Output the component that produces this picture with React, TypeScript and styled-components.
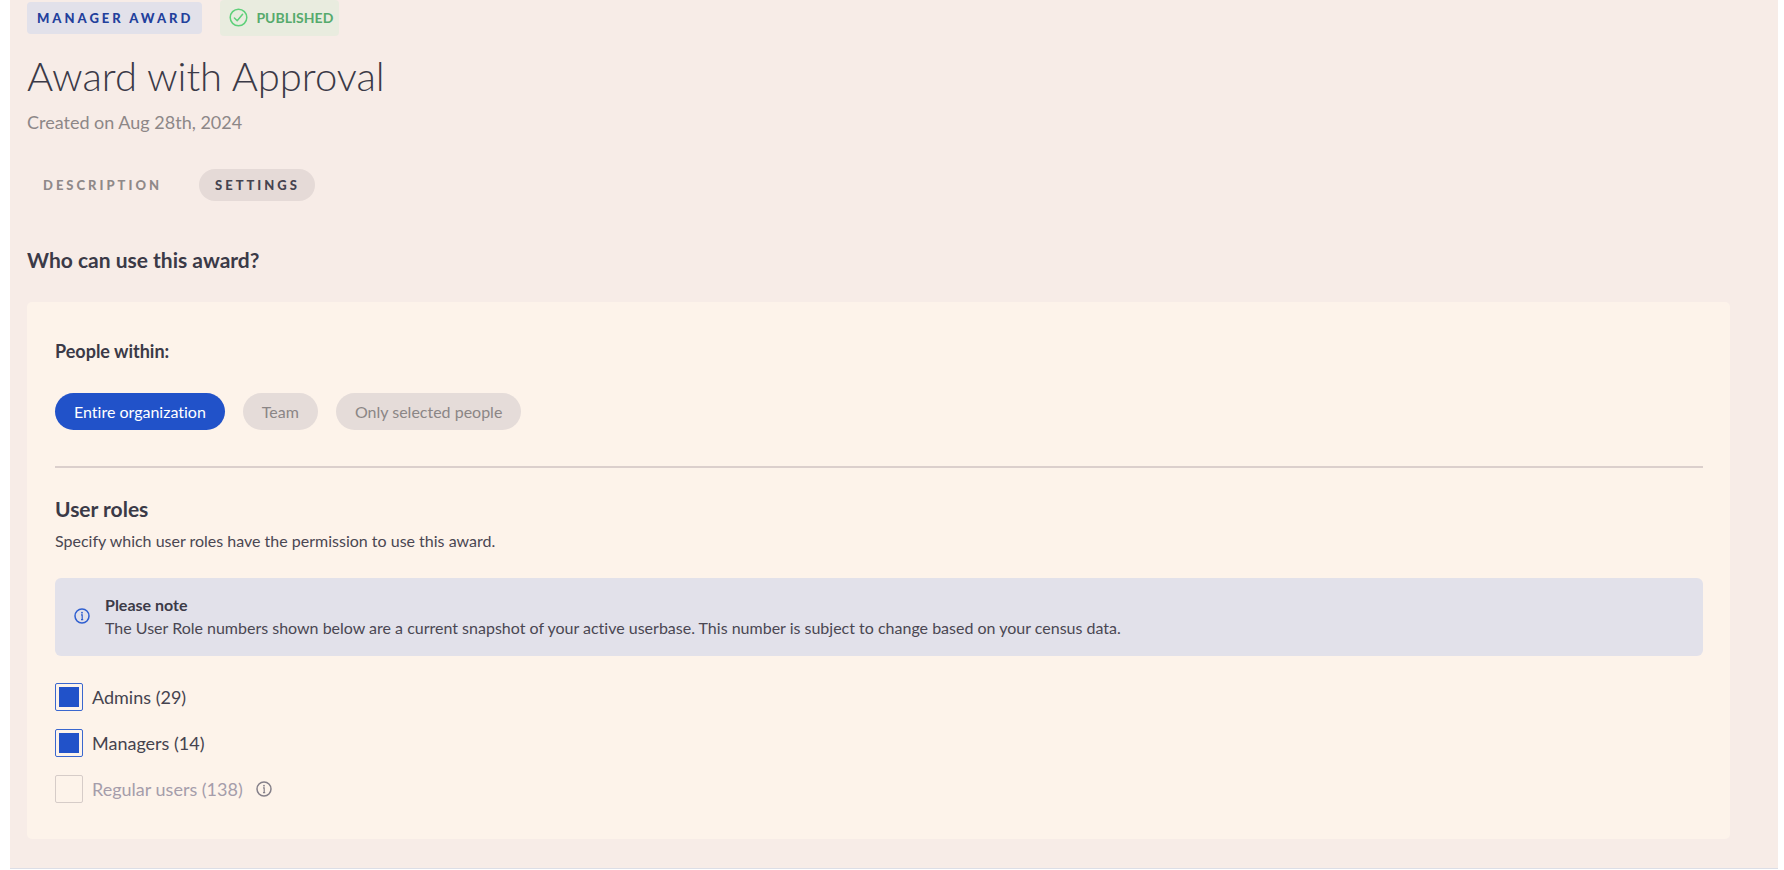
import React from "react";
import styled, { createGlobalStyle } from "styled-components";

const GlobalStyle = createGlobalStyle`
  *, *::before, *::after { box-sizing: border-box; }
  body {
    margin: 0;
    background: #ffffff;
    color: #3b3a47;
    font-family: Lato, "Liberation Sans", sans-serif;
    font-size: 16px;
    font-variant-ligatures: none;
  }
  h1, h2, h3, p { margin: 0; }
  button { font-family: inherit; font-variant-ligatures: inherit; cursor: pointer; border: 0; }
`;

const Page = styled.main`
  margin: 0 6px 0 10px;
  padding: 0 48px 29px 17px;
  background: #f7ece7;
  border-bottom: 1px solid #dcdee6;
`;

const Badges = styled.div`
  display: flex;
  align-items: center;
  gap: 18px;
`;

const TypeBadge = styled.span`
  padding: 0 9px 0 10px;
  border-radius: 4px;
  background: #e2e1ea;
  color: #22409c;
  font-size: 13px;
  font-weight: 900;
  line-height: 32px;
  letter-spacing: 3px;
`;

const StatusBadge = styled.span`
  display: flex;
  align-items: center;
  gap: 8px;
  padding: 0 6px 2px 9px;
  height: 36px;
  border-radius: 4px;
  background: #e9ecdf;
  color: #56aa6c;
  font-size: 14px;
  font-weight: 700;
`;

const Title = styled.h1`
  margin-top: 16px;
  font-size: 40px;
  font-weight: 300;
  line-height: 48px;
`;

const Created = styled.p`
  margin-top: 10px;
  color: #8d8787;
  font-size: 18px;
  line-height: 24px;
`;

const Tabs = styled.div`
  display: flex;
  gap: 22px;
  margin-top: 35px;
`;

const Tab = styled.button<{ $active?: boolean }>`
  height: 32px;
  padding: 0 15px 0 16px;
  border-radius: 16px;
  background: ${(p) => (p.$active ? "#e5dad7" : "transparent")};
  color: ${(p) => (p.$active ? "#45434f" : "#8f8989")};
  font-size: 13px;
  font-weight: 900;
  letter-spacing: 3px;
`;

const SectionTitle = styled.h2`
  margin-top: 45px;
  font-size: 21px;
  font-weight: 700;
  line-height: 28px;
`;

const Panel = styled.section`
  margin-top: 28px;
  padding: 37px 27px 36px 28px;
  border-radius: 5px;
  background: #fdf3ea;
`;

const GroupTitle = styled.h3`
  font-size: 18px;
  font-weight: 700;
  line-height: 24px;
`;

const Pills = styled.div`
  display: flex;
  flex-wrap: wrap;
  gap: 18px;
  margin-top: 30px;
`;

const Pill = styled.button<{ $active?: boolean }>`
  height: 37px;
  padding: 0 19px;
  border-radius: 19px;
  background: ${(p) => (p.$active ? "#2152c9" : "#e5dcd9")};
  color: ${(p) => (p.$active ? "#ffffff" : "#8b8686")};
  font-size: 16px;
`;

const Divider = styled.hr`
  height: 2px;
  margin: 36px 0 0;
  border: 0;
  background: #dbcfcc;
`;

const RolesTitle = styled.h2`
  margin-top: 27px;
  font-size: 21px;
  font-weight: 700;
  line-height: 28px;
`;

const Hint = styled.p`
  margin-top: 6px;
  color: #4a4752;
  line-height: 24px;
`;

const Note = styled.aside`
  display: flex;
  align-items: center;
  gap: 15px;
  margin-top: 25px;
  padding: 15px 19px 17px;
  border-radius: 6px;
  background: #e2e1ea;
  color: #4a4752;
  line-height: 23px;

  svg {
    flex: none;
    color: #2f5fd0;
  }
`;

const NoteTitle = styled.strong`
  display: block;
  color: #3b3a47;
`;

const Roles = styled.div`
  display: grid;
  gap: 18px;
  margin-top: 27px;
`;

const RoleRow = styled.div`
  display: flex;
  align-items: center;
`;

const RoleLabel = styled.label<{ $disabled?: boolean }>`
  display: flex;
  align-items: center;
  gap: 9px;
  color: ${(p) => (p.$disabled ? "#a59daa" : "#45434f")};
  font-size: 18px;
  line-height: 28px;
`;

const Checkbox = styled.input`
  appearance: none;
  width: 28px;
  height: 28px;
  margin: 0;
  padding: 3px;
  border: 1px solid #3a67cf;
  border-radius: 2px;

  &:checked {
    background: #2152c9 content-box;
  }
  &:disabled {
    border-color: #d6ccc8;
  }
`;

const InfoButton = styled.button`
  display: flex;
  margin-left: 13px;
  padding: 0;
  background: none;
  color: #85808a;
`;

const InfoIcon = () => (
  <svg width="16" height="16" viewBox="0 0 16 16" fill="none" stroke="currentColor" aria-hidden="true">
    <circle cx="8" cy="8" r="7" strokeWidth="1.5" />
    <path d="M7 6.9h1.2v4.7M7 11.6h2.2" strokeWidth="1.2" />
    <circle cx="8" cy="4.7" r="0.9" fill="currentColor" stroke="none" />
  </svg>
);

const CheckIcon = () => (
  <svg width="19" height="19" viewBox="0 0 19 19" fill="none" stroke="#5fd07a" aria-hidden="true">
    <circle cx="9.5" cy="9.5" r="8.3" strokeWidth="1.5" />
    <path d="M5.4 10l2.8 2.7 5.4-6.4" strokeWidth="1.5" strokeLinecap="round" strokeLinejoin="round" />
  </svg>
);

const scopes = ["Entire organization", "Team", "Only selected people"];

const roles = [
  { id: "admins", label: "Admins (29)", checked: true },
  { id: "managers", label: "Managers (14)", checked: true },
  { id: "regular", label: "Regular users (138)", checked: false, disabled: true },
];

export default function App() {
  const [tab, setTab] = React.useState("SETTINGS");
  const [scope, setScope] = React.useState(scopes[0]);

  return (
    <>
      <GlobalStyle />
      <Page>
        <Badges>
          <TypeBadge>MANAGER AWARD</TypeBadge>
          <StatusBadge>
            <CheckIcon />
            PUBLISHED
          </StatusBadge>
        </Badges>
        <Title>Award with Approval</Title>
        <Created>Created on Aug 28th, 2024</Created>
        <Tabs role="tablist">
          {["DESCRIPTION", "SETTINGS"].map((name) => (
            <Tab key={name} role="tab" aria-selected={tab === name} $active={tab === name} onClick={() => setTab(name)}>
              {name}
            </Tab>
          ))}
        </Tabs>
        <SectionTitle>Who can use this award?</SectionTitle>
        <Panel>
          <GroupTitle>People within:</GroupTitle>
          <Pills>
            {scopes.map((name) => (
              <Pill key={name} aria-pressed={scope === name} $active={scope === name} onClick={() => setScope(name)}>
                {name}
              </Pill>
            ))}
          </Pills>
          <Divider />
          <RolesTitle>User roles</RolesTitle>
          <Hint>Specify which user roles have the permission to use this award.</Hint>
          <Note>
            <InfoIcon />
            <p>
              <NoteTitle>Please note</NoteTitle>
              The User Role numbers shown below are a current snapshot of your active userbase. This number is subject
              to change based on your census data.
            </p>
          </Note>
          <Roles>
            {roles.map((role) => (
              <RoleRow key={role.id}>
                <RoleLabel htmlFor={role.id} $disabled={role.disabled}>
                  <Checkbox id={role.id} type="checkbox" defaultChecked={role.checked} disabled={role.disabled} />
                  {role.label}
                </RoleLabel>
                {role.disabled && (
                  <InfoButton aria-label="About regular users">
                    <InfoIcon />
                  </InfoButton>
                )}
              </RoleRow>
            ))}
          </Roles>
        </Panel>
      </Page>
    </>
  );
}
